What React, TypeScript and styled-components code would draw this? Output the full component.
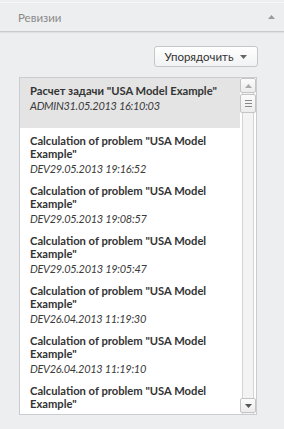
import React from "react";
import styled, { createGlobalStyle } from "styled-components";

const GlobalStyle = createGlobalStyle`
	html, body {
		margin: 0;
		padding: 0;
		background-color: #edeef0;
	}
	body {
		font-family: Lato, "Noto Sans", sans-serif;
		font-size: 11px;
		color: #2e2e2e;
	}
`;

const StyledPage = styled.div`
	width: 284px;
	height: 429px;
	box-sizing: border-box;
	padding-top: 2px;
	overflow: hidden;
`;

const StyledHeader = styled.div`
	display: flex;
	align-items: center;
	justify-content: space-between;
	height: 28px;
	padding: 0 9px 0 18px;
	border-top: 1px solid #f7f8f9;
	border-bottom: 1px solid #c9cacc;
	box-shadow: 0 1px 1px rgba(0, 0, 0, 0.06);
	color: #8a8a8a;
	font-size: 11.5px;
`;

const StyledToolbar = styled.div`
	display: flex;
	justify-content: flex-end;
	padding: 14px 26px 0 0;
`;

const StyledSortButton = styled.button`
	display: flex;
	align-items: center;
	gap: 7px;
	height: 21px;
	width: 104px;
	justify-content: center;
	padding: 0 6px;
	border: 1px solid #c6c7c9;
	border-radius: 3px;
	background: linear-gradient(#ffffff, #f1f2f3);
	font-family: inherit;
	font-size: 11.5px;
	color: #333;
`;

const StyledListBox = styled.div`
	display: flex;
	height: 336px;
	margin: 10px 27px 0 19px;
	border: 1px solid #cbcccf;
	background-color: #ffffff;
	overflow: hidden;
`;

const StyledItems = styled.div`
	flex: 1;
	overflow: hidden;
`;

const StyledItem = styled.div<{ $selected?: boolean }>`
	height: 50px;
	box-sizing: border-box;
	padding: 6px 8px 0 10px;
	background-color: ${(p) => (p.$selected ? "#e4e4e4" : "transparent")};
`;

const StyledTitle = styled.div`
	font-weight: 700;
	font-size: 11.2px;
	line-height: 13px;
	color: #333;
`;

const StyledDate = styled.div`
	margin-top: 2px;
	line-height: 13px;
	font-style: italic;
	letter-spacing: -0.3px;
	color: #3a3a3a;
`;

const StyledScrollbar = styled.div`
	display: flex;
	flex-direction: column;
	width: 16px;
	background: linear-gradient(
		to right,
		#ffffff 0 2px,
		#d4d4d4 2px 3px,
		#f3f3f3 3px 13px,
		#d4d4d4 13px 14px,
		#ffffff 14px
	);
`;

const StyledScrollButton = styled.div<{ $height?: number }>`
	display: flex;
	align-items: center;
	justify-content: center;
	height: ${(p) => p.$height ?? 15}px;
	box-sizing: border-box;
	margin-bottom: 1px;
	border: 1px solid #c4c4c4;
	border-radius: 2px;
	background: linear-gradient(#fbfbfb, #ececec);
`;

const StyledSpacer = styled.div`
	flex: 1;
`;

function Arrow({ up, color = "#777" }: { up?: boolean; color?: string }) {
	return (
		<svg width="7" height="4" viewBox="0 0 7 4">
			{up ? (
				<polygon points="0,4 7,4 3.5,0" fill={color} />
			) : (
				<polygon points="0,0 7,0 3.5,4" fill={color} />
			)}
		</svg>
	);
}

function Grip() {
	return (
		<svg width="7" height="8" viewBox="0 0 7 8">
			<rect x="0" y="0" width="7" height="1" fill="#888" />
			<rect x="0" y="3" width="7" height="1" fill="#888" />
			<rect x="0" y="6" width="7" height="1" fill="#888" />
		</svg>
	);
}

const revisions = [
	{ title: 'Расчет задачи "USA Model Example"', author: "ADMIN", date: "31.05.2013 16:10:03" },
	{ title: 'Calculation of problem "USA Model Example"', author: "DEV", date: "29.05.2013 19:16:52" },
	{ title: 'Calculation of problem "USA Model Example"', author: "DEV", date: "29.05.2013 19:08:57" },
	{ title: 'Calculation of problem "USA Model Example"', author: "DEV", date: "29.05.2013 19:05:47" },
	{ title: 'Calculation of problem "USA Model Example"', author: "DEV", date: "26.04.2013 11:19:30" },
	{ title: 'Calculation of problem "USA Model Example"', author: "DEV", date: "26.04.2013 11:19:10" },
	{ title: 'Calculation of problem "USA Model Example"', author: "DEV", date: "26.04.2013 11:18:44" },
];

export default function App() {
	return (
		<>
			<GlobalStyle />
			<StyledPage>
				<StyledHeader>
					<span>Ревизии</span>
					<Arrow up color="#9a9a9a" />
				</StyledHeader>
				<StyledToolbar>
					<StyledSortButton>
						Упорядочить
						<Arrow color="#666" />
					</StyledSortButton>
				</StyledToolbar>
				<StyledListBox>
					<StyledItems>
						{revisions.map((r, i) => (
							<StyledItem key={i} $selected={i === 0}>
								<StyledTitle>{r.title}</StyledTitle>
								<StyledDate>
									{r.author}
									{r.date}
								</StyledDate>
							</StyledItem>
						))}
					</StyledItems>
					<StyledScrollbar>
						<StyledScrollButton>
							<Arrow up color="#aaa" />
						</StyledScrollButton>
						<StyledScrollButton $height={19}>
							<Grip />
						</StyledScrollButton>
						<StyledSpacer />
						<StyledScrollButton>
							<Arrow color="#555" />
						</StyledScrollButton>
					</StyledScrollbar>
				</StyledListBox>
			</StyledPage>
		</>
	);
}
